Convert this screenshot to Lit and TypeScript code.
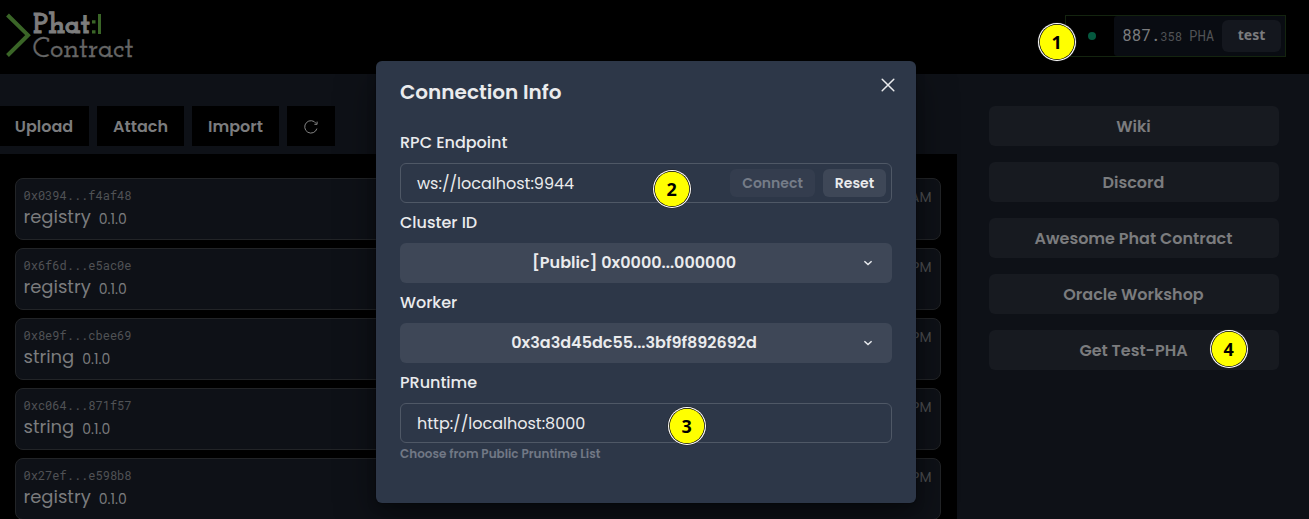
import { LitElement, html, css } from "lit";
import { customElement } from "lit/decorators.js";

const contracts = [
  { id: "0x0394...f4af48", name: "registry", time: "09:12 AM" },
  { id: "0x6f6d...e5ac0e", name: "registry", time: "08:40 PM" },
  { id: "0x8e9f...cbee69", name: "string", time: "08:31 PM" },
  { id: "0xc064...871f57", name: "string", time: "07:55 PM" },
  { id: "0x27ef...e598b8", name: "registry", time: "07:20 PM" },
];

const links = ["Wiki", "Discord", "Awesome Phat Contract", "Oracle Workshop", "Get Test-PHA"];

const chevron = html`<svg class="chev" width="16" height="16" viewBox="0 0 16 16">
  <path d="M4.4 6.3 L8 9.6 L11.6 6.3" fill="none" stroke="#e8eaed" stroke-width="1.5" />
</svg>`;

@customElement("app-root")
class AppRoot extends LitElement {
  static styles = css`
    :host {
      display: block;
      position: relative;
      width: 1309px;
      height: 519px;
      overflow: hidden;
      background: #0e1117;
      color: #7b7c7e;
      font-family: Poppins, Inter, "Open Sans", sans-serif;
      font-size: 16px;
      line-height: 24px;
    }
    * { box-sizing: border-box; }
    .header {
      height: 74px;
      background: #000;
      display: flex;
      justify-content: space-between;
      padding: 15px 23px 0 0;
    }
    .logo { display: block; margin-top: -15px; }
    .logo text { font-family: "Josefin Slab", "DejaVu Serif", serif; font-size: 28px; font-weight: 700; }
    .phat { fill: #7d7d7d; stroke: #7d7d7d; stroke-width: 0.9px; }
    .logo .contract { fill: #666; stroke: #666; stroke-width: 0.3px; font-weight: 600; }
    .account {
      display: flex;
      width: 221px;
      height: 42px;
      border: 1px solid #14240f;
    }
    .status { width: 48px; display: flex; align-items: center; justify-content: center; padding-left: 4px; }
    .dot { width: 8px; height: 8px; border-radius: 50%; background: #05593f; }
    .wallet {
      flex: 1;
      display: flex;
      align-items: center;
      background: #090c12;
      border-radius: 3px 0 0 3px;
      padding: 0 4px 0 8px;
      font-family: "Roboto Mono", "DejaVu Sans Mono", monospace;
      justify-content: space-between;
    }
    .balance { display: flex; align-items: baseline; padding-bottom: 2px; }
    .frac { font-size: 12px; color: #515356; }
    .unit { font-size: 14px; color: #515356; margin-left: 7px; }
    .user {
      width: 59px;
      height: 32px;
      border-radius: 6px;
      background: #14171e;
      display: flex;
      align-items: center;
      justify-content: center;
      font: 700 14px/20px "Noto Sans", sans-serif;
      padding-bottom: 2px;
    }
    .body { display: flex; height: 445px; }
    .main { width: 957px; padding-top: 32px; }
    .tools { display: flex; gap: 8px; height: 48px; margin-left: -1px; }
    .tool {
      height: 40px;
      padding: 1px 0 0;
      background: #000;
      display: flex;
      align-items: center;
      justify-content: center;
      font-weight: 600;
      width: 87px;
    }
    .tool:first-child { width: 90px; }
    .tool.icon { width: 48px; }
    .list {
      background: #000;
      height: 365px;
      padding: 24px 16px 0 15px;
      display: flex;
      flex-direction: column;
      gap: 8px;
      overflow: hidden;
    }
    .card {
      flex: none;
      height: 62px;
      border: 1px solid #222427;
      border-radius: 8px;
      background: #0e1117;
      padding: 8px 8.5px 0 7.5px;
      display: flex;
      justify-content: space-between;
    }
    .id {
      font: 12px/16px "Roboto Mono", "DejaVu Sans Mono", monospace;
      color: #505255;
    }
    .name { display: flex; align-items: flex-start; gap: 8px; font-size: 18px; line-height: 28px; }
    .ver { font-size: 14px; padding-top: 2px; }
    .time { font-size: 14px; line-height: 21px; color: #4c4e51; }
    .side {
      flex: 1;
      padding: 32px 30px 0 32px;
      display: flex;
      flex-direction: column;
      gap: 16px;
    }
    .link {
      height: 40px;
      border-radius: 6px;
      background: #171a20;
      display: flex;
      align-items: center;
      justify-content: center;
      font-weight: 600;
      padding: 1px 1px 0 0;
    }
    .modal {
      position: absolute;
      left: 376px;
      top: 61px;
      width: 540px;
      height: 442px;
      border-radius: 6px;
      background: #2d3748;
      color: #eaebed;
      padding: 16px 24px;
      box-shadow: rgba(0, 0, 0, 0.1) 0 0 0 1px, rgba(0, 0, 0, 0.2) 0 5px 10px, rgba(0, 0, 0, 0.4) 0 15px 40px;
    }
    .title-row { display: flex; justify-content: space-between; height: 54px; }
    .title { font-size: 20px; line-height: 30px; font-weight: 600; }
    .close { margin: 0 -4px 0 0; }
    .label { height: 32px; line-height: 24px; font-weight: 500; }
    .field {
      height: 40px;
      border: 1px solid #4f5866;
      border-radius: 6px;
      margin-bottom: 8px;
      padding: 0 5px 0 16px;
      display: flex;
      align-items: center;
      gap: 8px;
    }
    .value { flex: 1; padding-top: 2px; }
    .small {
      height: 28px;
      width: 63px;
      border-radius: 6px;
      background: #3e4757;
      display: flex;
      align-items: center;
      justify-content: center;
      font-size: 14px;
      font-weight: 600;
    }
    .small.off { width: 85px; background: #343d4e; color: #757c88; }
    .select {
      height: 40px;
      border-radius: 6px;
      background: #3e4757;
      margin-bottom: 8px;
      padding: 0 16px;
      display: flex;
      align-items: center;
      gap: 8px;
      font-weight: 600;
    }
    .picked { flex: 1; text-align: center; }
    .chev { flex: none; }
    .hint { font-size: 12px; line-height: 18px; font-weight: 600; color: #717885; margin-top: -6px; }
    .pin { position: absolute; width: 40px; height: 40px; }
    .pin svg { display: block; }
    .pin text { font: 700 18px "Noto Sans", sans-serif; }
    .p1 { left: 1037px; top: 22px; }
    .p2 { left: 652px; top: 169px; }
    .p3 { left: 667px; top: 406px; }
    .p4 { left: 1209px; top: 329px; }
  `;

  pin(n: number) {
    return html`<div class="pin p${n}">
      <svg width="40" height="40" viewBox="0 0 40 40">
        <circle cx="20" cy="20" r="19.6" fill="#222" />
        <circle cx="20" cy="20" r="19" fill="#fff" />
        <circle cx="20" cy="20" r="17.9" fill="#000" />
        <circle cx="20" cy="20" r="17.2" fill="#ff0" />
        <text x="19.7" y="27" text-anchor="middle">${n}</text>
      </svg>
    </div>`;
  }

  render() {
    return html`
      <div class="header">
        <svg class="logo" width="140" height="70" viewBox="0 0 140 70">
          <path d="M7.5 15 L28 35.2 L7.5 55.5" fill="none" stroke="#3a6527" stroke-width="4" />
          <text class="phat" x="33" y="33.4" textLength="57" lengthAdjust="spacingAndGlyphs">Phat</text>
          <path d="M92 20.3h3.5v3.3H92z M92 30.3h3.5v3.3H92z M98 14h3v20h-3z" fill="#3a6527" />
          <text class="contract" x="32.5" y="56.8" textLength="101" lengthAdjust="spacingAndGlyphs">Contract</text>
        </svg>
        <div class="account">
          <div class="status"><span class="dot"></span></div>
          <div class="wallet">
            <div class="balance"><span>887.</span><span class="frac">358</span><span class="unit">PHA</span></div>
            <div class="user">test</div>
          </div>
        </div>
      </div>
      <div class="body">
        <div class="main">
          <div class="tools">
            <div class="tool">Upload</div>
            <div class="tool">Attach</div>
            <div class="tool">Import</div>
            <div class="tool icon">
              <svg width="16" height="16" viewBox="0 0 16 16" fill="none" stroke="#858585" stroke-width="1">
                <path d="M13.9 9.6 A6.2 6.2 0 1 1 13.2 4.6" />
                <path d="M14.1 2.6 V5.3 H11.4" />
              </svg>
            </div>
          </div>
          <div class="list">
            ${contracts.map(
              (c) => html`<div class="card">
                <div>
                  <div class="id">${c.id}</div>
                  <div class="name"><span>${c.name}</span><span class="ver">${"0.1.0"}</span></div>
                </div>
                <div class="time">${c.time}</div>
              </div>`
            )}
          </div>
        </div>
        <div class="side">${links.map((label) => html`<div class="link">${label}</div>`)}</div>
      </div>
      <div class="modal">
        <div class="title-row">
          <div class="title">Connection Info</div>
          <svg class="close" width="16" height="16" viewBox="0 0 16 16">
            <path d="M2.2 2.2 L13.8 13.8 M13.8 2.2 L2.2 13.8" stroke="#eaebed" stroke-width="1.5" stroke-linecap="round" />
          </svg>
        </div>
        <div class="label">RPC Endpoint</div>
        <div class="field">
          <div class="value">ws://localhost:9944</div>
          <div class="small off">Connect</div>
          <div class="small">Reset</div>
        </div>
        <div class="label">Cluster ID</div>
        <div class="select"><div class="picked">[Public] 0x0000...000000</div>${chevron}</div>
        <div class="label">Worker</div>
        <div class="select"><div class="picked">0x3a3d45dc55...3bf9f892692d</div>${chevron}</div>
        <div class="label">PRuntime</div>
        <div class="field"><div class="value">http://localhost:8000</div></div>
        <div class="hint">Choose from Public Pruntime List</div>
      </div>
      ${[1, 2, 3, 4].map((n) => this.pin(n))}
    `;
  }
}
